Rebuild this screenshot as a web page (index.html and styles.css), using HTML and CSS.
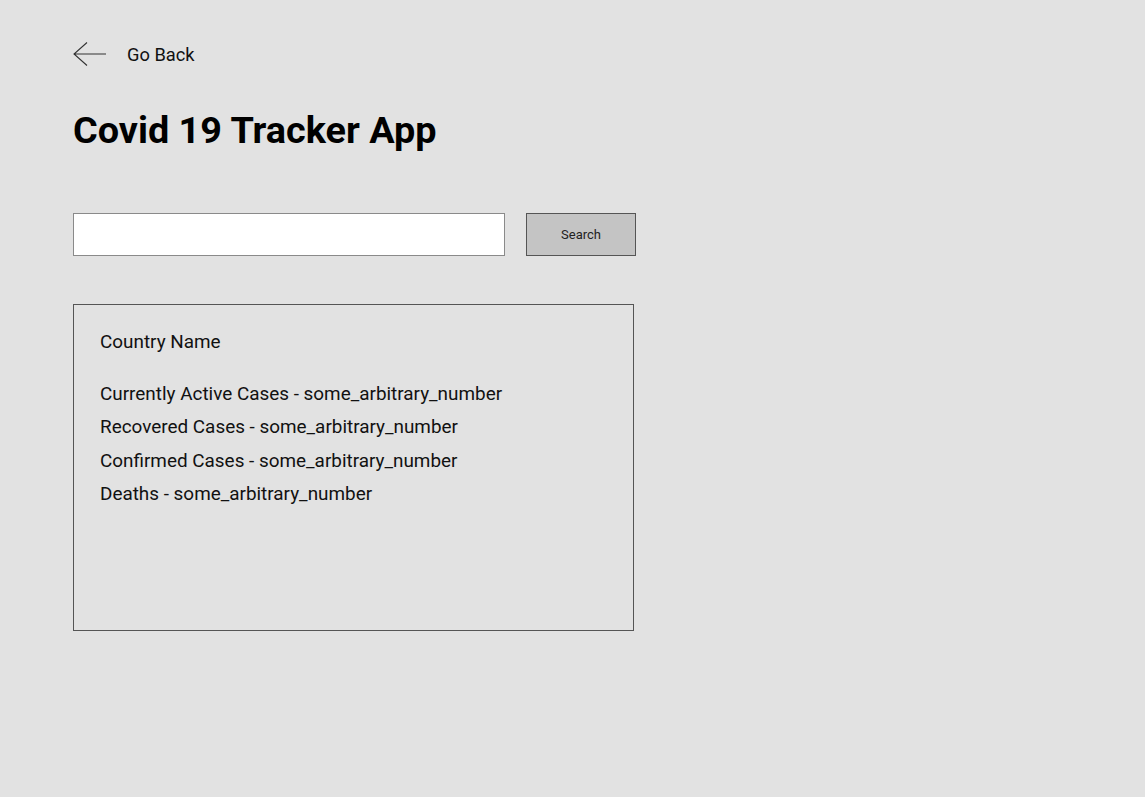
FILE: index.html
```html
<!DOCTYPE html>
<html>
<head>
<meta charset="utf-8">
<link rel="stylesheet" href="styles.css">
</head>
<body>
<div class="page">
  <a class="back">
    <svg class="arrow" width="34" height="24" viewBox="0 0 34 24"><path d="M33 12H1M14 0.5L1 12L14 23.5" fill="none" stroke="#333" stroke-width="1.1"/></svg>
    <span>Go Back</span>
  </a>
  <h1 class="title">Covid 19 Tracker App</h1>
  <div class="search">
    <input class="field" type="text">
    <button class="btn">Search</button>
  </div>
  <div class="card">
    <div class="country">Country Name</div>
    <div class="stats">
      <div>Currently Active Cases - some_arbitrary_number</div>
      <div>Recovered Cases - some_arbitrary_number</div>
      <div>Confirmed Cases - some_arbitrary_number</div>
      <div>Deaths - some_arbitrary_number</div>
    </div>
  </div>
</div>
</body>
</html>
```

FILE: styles.css
```css
html, body {
  margin: 0;
  padding: 0;
  background: #e2e2e2;
  font-family: Roboto, "Liberation Sans", sans-serif;
  color: #111;
}
.page {
  padding: 42px 0 0 73px;
}
.back {
  display: flex;
  align-items: center;
  gap: 20px;
  font-size: 18.3px;
  height: 24px;
  color: #111;
}
.arrow { display: block; }
.title {
  margin: 44px 0 0 0;
  font-size: 37.8px;
  font-weight: 700;
  line-height: 40px;
  color: #000;
}
.search {
  display: flex;
  gap: 21px;
  margin-top: 63px;
}
.field {
  width: 432px;
  height: 43px;
  box-sizing: border-box;
  border: 1px solid #8a8a8a;
  background: #fff;
  margin: 0;
  padding: 0 8px;
}
.btn {
  width: 110px;
  height: 43px;
  box-sizing: border-box;
  border: 1px solid #555;
  background: #c4c4c4;
  font-family: Roboto, "Liberation Sans", sans-serif;
  font-size: 13px;
  color: #222;
  margin: 0;
  padding: 0;
}
.card {
  margin-top: 48px;
  width: 561px;
  height: 327px;
  box-sizing: border-box;
  border: 1px solid #555;
  padding: 20px 26px;
  font-size: 18.9px;
}
.country {
  line-height: 33px;
}
.stats {
  margin-top: 19px;
  line-height: 33.3px;
}
```
